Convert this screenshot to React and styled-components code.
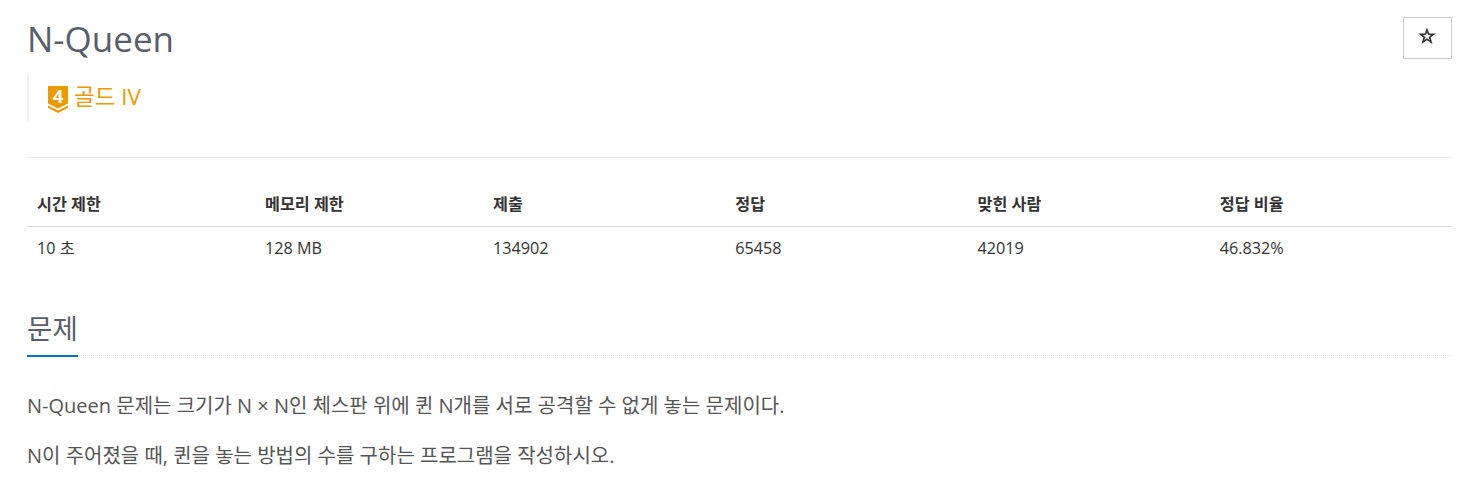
import React from 'react';
import styled, { createGlobalStyle } from 'styled-components';

const GlobalStyle = createGlobalStyle`
  * { box-sizing: border-box; }
  body {
    margin: 0;
    background: #fff;
    color: #333;
    font-family: 'Open Sans', 'Noto Sans CJK KR', sans-serif;
  }
`;

const Page = styled.main`
  height: 481px;
  overflow: hidden;
  padding: 17px 32px 0 27px;
`;

const Header = styled.header`
  display: flex;
  justify-content: space-between;
  align-items: flex-start;
  height: 141px;
  border-bottom: 1px solid #eee;
`;

const Title = styled.h1`
  margin: 0;
  height: 56px;
  font-size: 35px;
  font-weight: 400;
  line-height: 44px;
  color: #585f69;
`;

const Tier = styled.div`
  display: flex;
  align-items: flex-start;
  gap: 6px;
  height: 48px;
  padding-left: 19px;
  border-left: 2px solid #eee;
  font-size: 22.5px;
  line-height: 48px;
  color: #ec9a00;
`;

const TierIcon = styled.svg`
  display: block;
  width: 20px;
  height: 27px;
  margin-top: 13px;
  overflow: visible;
`;

const StarButton = styled.button`
  display: flex;
  align-items: center;
  justify-content: center;
  width: 49px;
  height: 42px;
  padding: 0 1px 4px 0;
  border: 1px solid #ccc;
  background: #fff;
`;

const InfoTable = styled.table`
  width: 1425px;
  margin-top: 24px;
  border-collapse: collapse;
  table-layout: fixed;
  font-size: 16.2px;
`;

const HeadCell = styled.th`
  width: ${({ $width }) => $width};
  height: 44px;
  padding: 0 10px;
  border-bottom: 1px solid #ddd;
  font-weight: 700;
  line-height: 20px;
  text-align: left;
`;

const Cell = styled.td`
  height: 43px;
  padding: 1px 10px 0;
  line-height: 20px;
`;

const SectionHead = styled.div`
  display: flex;
  margin-top: 37px;
  border-bottom: 1px dotted #e0e3e8;
`;

const SectionTitle = styled.h2`
  margin: 0 0 -2px;
  height: 51px;
  border-bottom: 2px solid #0076c0;
  font-size: 27.6px;
  font-weight: 400;
  line-height: 45px;
  color: #585f69;
`;

const Description = styled.section`
  padding-top: 34px;
  font-size: 20px;
  color: #555;
`;

const Paragraph = styled.p`
  margin: 0 0 18px;
  line-height: 32px;
`;

const columns = [
  { label: '시간 제한', value: '10 초', width: '16%' },
  { label: '메모리 제한', value: '128 MB', width: '16%' },
  { label: '제출', value: '134902', width: '17%' },
  { label: '정답', value: '65458', width: '17%' },
  { label: '맞힌 사람', value: '42019', width: '17%' },
  { label: '정답 비율', value: '46.832%', width: '17%' },
];

const App = () => (
  <Page>
    <GlobalStyle />
    <Header>
      <div>
        <Title>N-Queen</Title>
        <Tier>
          <TierIcon viewBox="0 0 20 27">
            <path d="M0 0H20V17.5L10 22.5L0 17.5Z" fill="#ec9a00" />
            <path d="M0 19.5L10 24.5L20 19.5V21.7L10 27L0 21.7Z" fill="#ec9a00" />
            <text x="10" y="17" fill="#fff" fontSize="18.5" fontWeight="700" textAnchor="middle">4</text>
          </TierIcon>
          <span>골드 IV</span>
        </Tier>
      </div>
      <StarButton aria-label="즐겨찾기">
        <svg width="18" height="18" viewBox="0 0 18 18">
          <path
            d="M9 0.5L11.2 6.6H17.8L12.6 10.6L14.5 17L9 13.3L3.5 17L5.4 10.6L0.2 6.6H6.8ZM9 5.2L8 8.1H5L7.3 9.9L6.3 13.2L9 11.3L11.7 13.2L10.7 9.9L13 8.1H10Z"
            fill="#333"
            fillRule="evenodd"
          />
        </svg>
      </StarButton>
    </Header>
    <InfoTable>
      <thead>
        <tr>
          {columns.map(({ label, width }) => (
            <HeadCell key={label} $width={width}>{label}</HeadCell>
          ))}
        </tr>
      </thead>
      <tbody>
        <tr>
          {columns.map(({ label, value }) => (
            <Cell key={label}>{value}</Cell>
          ))}
        </tr>
      </tbody>
    </InfoTable>
    <SectionHead>
      <SectionTitle>문제</SectionTitle>
    </SectionHead>
    <Description>
      <Paragraph>N-Queen 문제는 크기가 N × N인 체스판 위에 퀸 N개를 서로 공격할 수 없게 놓는 문제이다.</Paragraph>
      <Paragraph>N이 주어졌을 때, 퀸을 놓는 방법의 수를 구하는 프로그램을 작성하시오.</Paragraph>
    </Description>
  </Page>
);

export default App;
